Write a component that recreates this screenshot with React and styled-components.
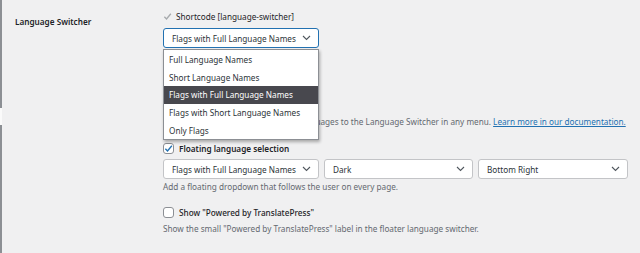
import styled, { createGlobalStyle } from "styled-components";

const GlobalStyle = createGlobalStyle`
  html, body {
    margin: 0;
    padding: 0;
    background: #f0f0f1;
  }
  body {
    font-family: "Noto Sans", "Open Sans", sans-serif;
    font-size: 8.2px;
    color: #2c3338;
  }
`;

const Chevron = () => (
  <svg width="9" height="6" viewBox="0 0 9 6">
    <path d="M1 1l3.5 3.5L8 1" fill="none" stroke="#50575e" strokeWidth="1.1" />
  </svg>
);

const TickMark = ({ color = "#2271b1", size = 9 }) => (
  <svg width={size} height={size} viewBox="0 0 10 10">
    <path d="M1.5 5.3l2.4 2.4L8.7 2" fill="none" stroke={color} strokeWidth="1.5" />
  </svg>
);

const options = [
  "Full Language Names",
  "Short Language Names",
  "Flags with Full Language Names",
  "Flags with Short Language Names",
  "Only Flags",
];

const App = () => {
  return (
    <Page>
      <GlobalStyle />
      <Edge>
        <EdgePart $h={108} />
        <EdgeGap />
        <EdgePart $h={128} />
      </Edge>
      <Row>
        <Label>Language Switcher</Label>
        <Field>
          <Line>
            <TickMark color="#a7aaad" size={9} />
            <span>Shortcode [language-switcher]</span>
          </Line>
          <SelectWrap>
            <Select $w={156} $focus>
              <span>Flags with Full Language Names</span>
              <Chevron />
            </Select>
            <Menu>
              {options.map((o) => (
                <MenuItem key={o} $active={o === "Flags with Full Language Names"}>
                  {o}
                </MenuItem>
              ))}
            </Menu>
          </SelectWrap>
          <Desc $top={4}>Use shortcode on any page or widget.</Desc>
          <CheckLine $top={32} $weight={600}>
            <Box $checked>
              <TickMark />
            </Box>
            <span>Menu item</span>
          </CheckLine>
          <Desc $top={10}>
            Go to Appearance -&gt; Menus to add languages to the Language Switcher in any menu.{" "}
            <Link>Learn more in our documentation.</Link>
          </Desc>
          <CheckLine $top={16} $weight={600}>
            <Box $checked>
              <TickMark />
            </Box>
            <span>Floating language selection</span>
          </CheckLine>
          <Selects>
            <Select $w={156}>
              <span>Flags with Full Language Names</span>
              <Chevron />
            </Select>
            <Select $w={149}>
              <span>Dark</span>
              <Chevron />
            </Select>
            <Select $w={150}>
              <span>Bottom Right</span>
              <Chevron />
            </Select>
          </Selects>
          <Desc $top={2}>Add a floating dropdown that follows the user on every page.</Desc>
          <CheckLine $top={15} $weight={500}>
            <Box />
            <span>Show "Powered by TranslatePress"</span>
          </CheckLine>
          <Desc $top={5}>
            Show the small "Powered by TranslatePress" label in the floater language switcher.
          </Desc>
        </Field>
      </Row>
    </Page>
  );
};

export default App;

const Page = styled.div`
  display: flex;
  width: 640px;
  height: 253px;
  overflow: hidden;
`;

const Edge = styled.div`
  display: flex;
  flex-direction: column;
  width: 2px;
  flex-shrink: 0;
`;

const EdgePart = styled.div`
  height: ${(p) => p.$h}px;
  background: #8c8f94;
`;

const EdgeGap = styled.div`
  height: 17px;
  background: #fafafa;
`;

const Row = styled.div`
  display: flex;
  padding-top: 10px;
`;

const Label = styled.div`
  width: 148px;
  padding-left: 13px;
  padding-top: 6px;
  font-weight: 600;
  color: #1d2327;
`;

const Field = styled.div`
  display: flex;
  flex-direction: column;
`;

const Line = styled.div`
  display: flex;
  align-items: center;
  gap: 4px;
  height: 12px;
  color: #1d2327;
`;

const SelectWrap = styled.div`
  position: relative;
  margin-top: 6px;
`;

const Select = styled.div`
  box-sizing: border-box;
  width: ${(p) => p.$w}px;
  height: 20px;
  display: flex;
  align-items: center;
  justify-content: space-between;
  padding: 0 7px 0 8px;
  background: #fff;
  border: 1px solid ${(p) => (p.$focus ? "#2271b1" : "#c3c4c7")};
  border-radius: 3px;
  color: #2c3338;
  white-space: nowrap;
`;

const Menu = styled.div`
  position: absolute;
  top: 21px;
  left: 0;
  width: 156px;
  box-sizing: border-box;
  padding-top: 1px;
  background: #fff;
  border: 1px solid #8c8f94;
  box-shadow: 1px 2px 3px rgba(0, 0, 0, 0.3);
  z-index: 2;
`;

const MenuItem = styled.div`
  height: 17.7px;
  line-height: 17.7px;
  padding-left: 5px;
  white-space: nowrap;
  background: ${(p) => (p.$active ? "#48484e" : "#fff")};
  color: ${(p) => (p.$active ? "#fff" : "#2c3338")};
`;

const Desc = styled.div`
  margin-top: ${(p) => p.$top}px;
  color: #646970;
  font-size: 8.2px;
  white-space: nowrap;
`;

const Link = styled.span`
  color: #2271b1;
  text-decoration: underline;
`;

const CheckLine = styled.div`
  display: flex;
  align-items: center;
  gap: 5px;
  margin-top: ${(p) => p.$top}px;
  color: #1d2327;
  font-weight: ${(p) => p.$weight};
`;

const Box = styled.span`
  box-sizing: border-box;
  width: 11px;
  height: 11px;
  display: flex;
  align-items: center;
  justify-content: center;
  background: #fff;
  border: 1px solid #8c8f94;
  border-radius: 3px;
`;

const Selects = styled.div`
  display: flex;
  gap: 5px;
  margin-top: 5px;
`;
